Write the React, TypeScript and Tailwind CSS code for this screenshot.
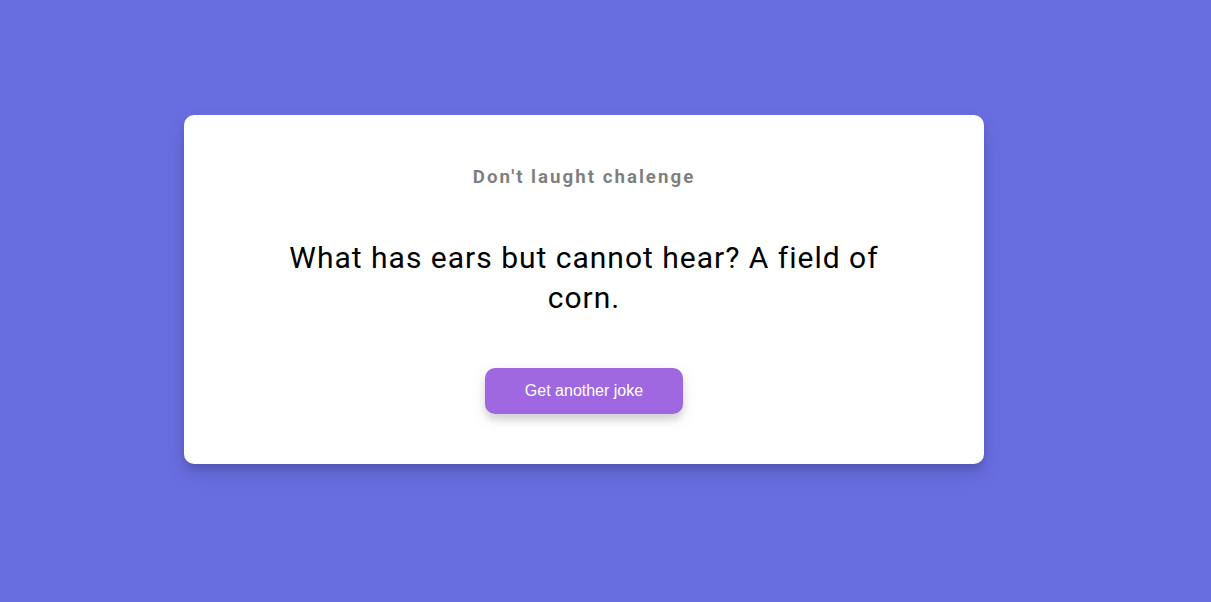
export default function App() {
  return (
    <div
      className="min-h-[602px] w-full bg-[#686de0] pt-[115px] pl-[184px] overflow-hidden"
      style={{ fontFamily: "Roboto, sans-serif" }}
    >
      <div className="w-[800px] rounded-[10px] bg-white px-5 py-[50px] text-center shadow-[0_10px_20px_rgba(0,0,0,0.1),0_6px_6px_rgba(0,0,0,0.1)]">
        <h3 className="m-0 pt-px text-[18.72px] font-bold leading-[22px] tracking-[2px] text-black opacity-50">
          Don't laught chalenge
        </h3>
        <div className="mx-auto my-[50px] max-w-[600px] text-[30px] leading-[40px] tracking-[1px] text-black">
          What has ears but cannot hear? A field of corn.
        </div>
        <button
          className="cursor-pointer rounded-[10px] border-0 bg-[#9f68e0] px-10 py-[14px] text-[16px] leading-[18px] text-white shadow-[0_5px_15px_rgba(0,0,0,0.1),0_6px_6px_rgba(0,0,0,0.1)]"
          style={{ fontFamily: '"Liberation Sans", Arial, sans-serif' }}
        >
          Get another joke
        </button>
      </div>
    </div>
  );
}
